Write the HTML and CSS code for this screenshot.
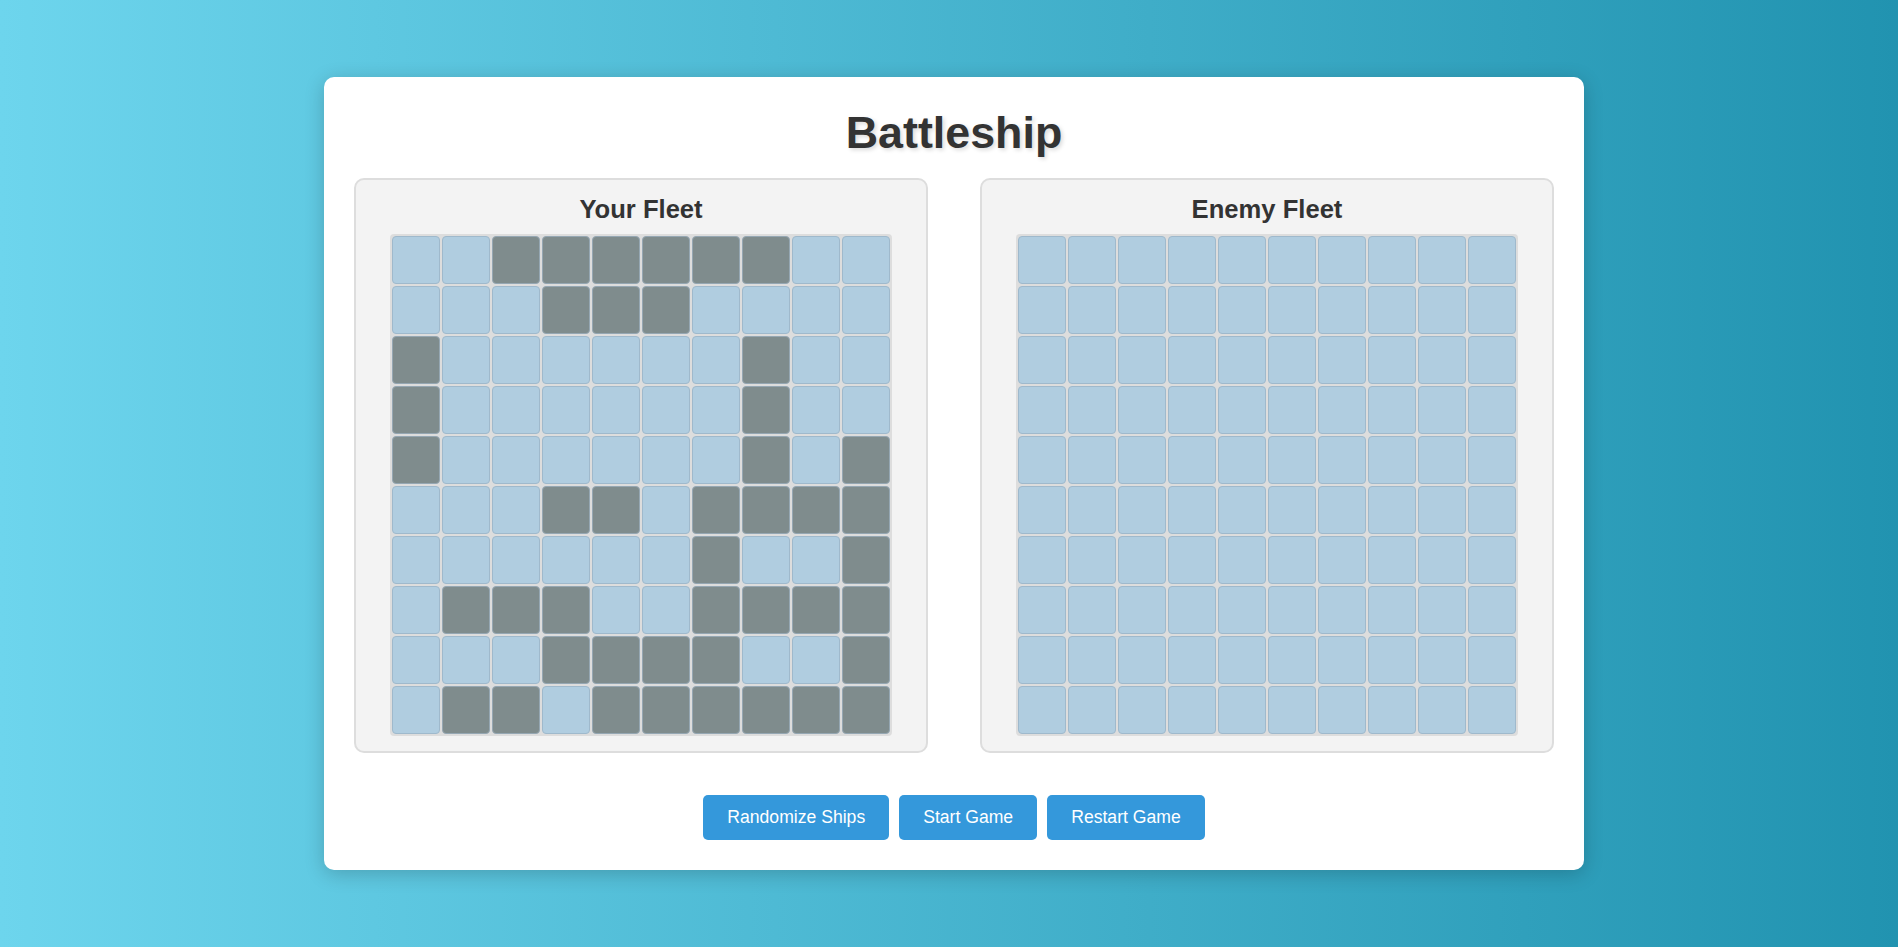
FILE: index.html
```html
<!DOCTYPE html>
<html lang="en">
<head>
<meta charset="utf-8">
<title>Battleship</title>
<link rel="stylesheet" href="styles.css">
</head>
<body>
<main class="game">
  <h1 class="title">Battleship</h1>
  <div class="boards">
    <section class="board">
      <h2 class="board-title">Your Fleet</h2>
      <div class="grid">
        <div class="c"></div><div class="c"></div><div class="c s"></div><div class="c s"></div><div class="c s"></div><div class="c s"></div><div class="c s"></div><div class="c s"></div><div class="c"></div><div class="c"></div>
        <div class="c"></div><div class="c"></div><div class="c"></div><div class="c s"></div><div class="c s"></div><div class="c s"></div><div class="c"></div><div class="c"></div><div class="c"></div><div class="c"></div>
        <div class="c s"></div><div class="c"></div><div class="c"></div><div class="c"></div><div class="c"></div><div class="c"></div><div class="c"></div><div class="c s"></div><div class="c"></div><div class="c"></div>
        <div class="c s"></div><div class="c"></div><div class="c"></div><div class="c"></div><div class="c"></div><div class="c"></div><div class="c"></div><div class="c s"></div><div class="c"></div><div class="c"></div>
        <div class="c s"></div><div class="c"></div><div class="c"></div><div class="c"></div><div class="c"></div><div class="c"></div><div class="c"></div><div class="c s"></div><div class="c"></div><div class="c s"></div>
        <div class="c"></div><div class="c"></div><div class="c"></div><div class="c s"></div><div class="c s"></div><div class="c"></div><div class="c s"></div><div class="c s"></div><div class="c s"></div><div class="c s"></div>
        <div class="c"></div><div class="c"></div><div class="c"></div><div class="c"></div><div class="c"></div><div class="c"></div><div class="c s"></div><div class="c"></div><div class="c"></div><div class="c s"></div>
        <div class="c"></div><div class="c s"></div><div class="c s"></div><div class="c s"></div><div class="c"></div><div class="c"></div><div class="c s"></div><div class="c s"></div><div class="c s"></div><div class="c s"></div>
        <div class="c"></div><div class="c"></div><div class="c"></div><div class="c s"></div><div class="c s"></div><div class="c s"></div><div class="c s"></div><div class="c"></div><div class="c"></div><div class="c s"></div>
        <div class="c"></div><div class="c s"></div><div class="c s"></div><div class="c"></div><div class="c s"></div><div class="c s"></div><div class="c s"></div><div class="c s"></div><div class="c s"></div><div class="c s"></div>
      </div>
    </section>
    <section class="board">
      <h2 class="board-title">Enemy Fleet</h2>
      <div class="grid">
        <div class="c"></div><div class="c"></div><div class="c"></div><div class="c"></div><div class="c"></div><div class="c"></div><div class="c"></div><div class="c"></div><div class="c"></div><div class="c"></div>
        <div class="c"></div><div class="c"></div><div class="c"></div><div class="c"></div><div class="c"></div><div class="c"></div><div class="c"></div><div class="c"></div><div class="c"></div><div class="c"></div>
        <div class="c"></div><div class="c"></div><div class="c"></div><div class="c"></div><div class="c"></div><div class="c"></div><div class="c"></div><div class="c"></div><div class="c"></div><div class="c"></div>
        <div class="c"></div><div class="c"></div><div class="c"></div><div class="c"></div><div class="c"></div><div class="c"></div><div class="c"></div><div class="c"></div><div class="c"></div><div class="c"></div>
        <div class="c"></div><div class="c"></div><div class="c"></div><div class="c"></div><div class="c"></div><div class="c"></div><div class="c"></div><div class="c"></div><div class="c"></div><div class="c"></div>
        <div class="c"></div><div class="c"></div><div class="c"></div><div class="c"></div><div class="c"></div><div class="c"></div><div class="c"></div><div class="c"></div><div class="c"></div><div class="c"></div>
        <div class="c"></div><div class="c"></div><div class="c"></div><div class="c"></div><div class="c"></div><div class="c"></div><div class="c"></div><div class="c"></div><div class="c"></div><div class="c"></div>
        <div class="c"></div><div class="c"></div><div class="c"></div><div class="c"></div><div class="c"></div><div class="c"></div><div class="c"></div><div class="c"></div><div class="c"></div><div class="c"></div>
        <div class="c"></div><div class="c"></div><div class="c"></div><div class="c"></div><div class="c"></div><div class="c"></div><div class="c"></div><div class="c"></div><div class="c"></div><div class="c"></div>
        <div class="c"></div><div class="c"></div><div class="c"></div><div class="c"></div><div class="c"></div><div class="c"></div><div class="c"></div><div class="c"></div><div class="c"></div><div class="c"></div>
      </div>
    </section>
  </div>
  <div class="controls">
    <button class="btn">Randomize Ships</button>
    <button class="btn">Start Game</button>
    <button class="btn">Restart Game</button>
  </div>
</main>
</body>
</html>
```

FILE: styles.css
```css
* { box-sizing: border-box; }

html, body { height: 100%; }

body {
  margin: 0;
  padding-left: 10px;
  min-height: 100vh;
  display: flex;
  align-items: center;
  justify-content: center;
  font-family: "Liberation Sans", Arial, sans-serif;
  color: #333;
  background: linear-gradient(to right, #6dd5ed, #2193b0);
}

.game {
  width: 1260px;
  padding: 30px;
  background: #fff;
  border-radius: 10px;
  box-shadow: 0 4px 20px rgba(0, 0, 0, 0.2);
}

.title {
  margin: 0 0 20px;
  text-align: center;
  font-size: 44.8px;
  font-weight: bold;
  color: #333;
  text-shadow: 2px 2px 4px rgba(0, 0, 0, 0.15);
}

.boards {
  display: flex;
  justify-content: space-between;
}

.board {
  width: 574px;
  padding: 15px;
  background: #f3f3f3;
  border: 2px solid #ddd;
  border-radius: 10px;
}

.board-title {
  margin: 0 0 10px;
  text-align: center;
  font-size: 25.6px;
  font-weight: bold;
  color: #333;
}

.grid {
  width: fit-content;
  margin: 0 auto;
  padding: 2px;
  display: grid;
  grid-template-columns: repeat(10, 48px);
  grid-auto-rows: 48px;
  gap: 2px;
  background: #ddd;
  border-radius: 4px;
}

.c {
  background: #b0cde0;
  border: 1px solid #9fb9cc;
  border-radius: 4px;
}

.c.s {
  background: #7f8c8d;
  border-color: #95a7b3;
}

.controls {
  margin-top: 42px;
  display: flex;
  justify-content: center;
  gap: 10px;
}

.btn {
  padding: 12px 24px;
  font-family: "Liberation Sans", Arial, sans-serif;
  font-size: 17.6px;
  color: #fff;
  background: #3498db;
  border: none;
  border-radius: 5px;
  cursor: pointer;
}
```
